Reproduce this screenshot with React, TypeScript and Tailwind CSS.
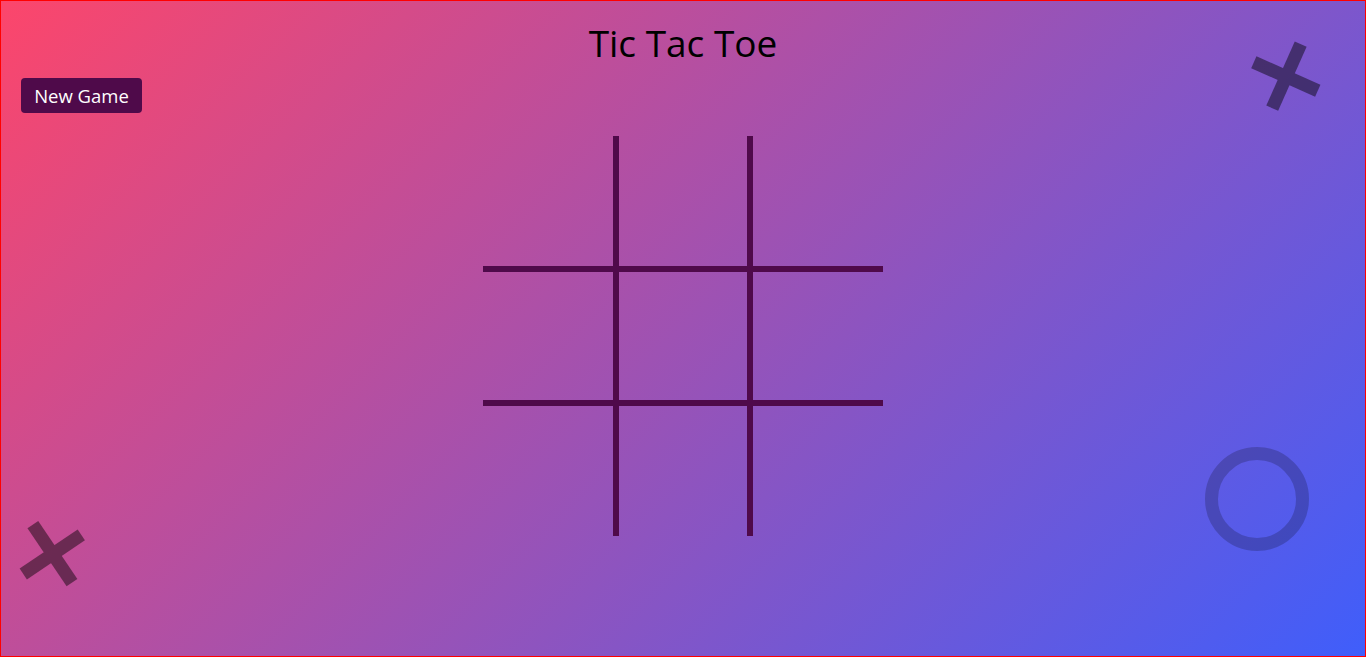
const CELLS = [
  "border-r-[3px] border-b-[3px]",
  "border-l-[3px] border-r-[3px] border-b-[3px]",
  "border-l-[3px] border-b-[3px]",
  "border-r-[3px] border-t-[3px] border-b-[3px]",
  "border-l-[3px] border-r-[3px] border-t-[3px] border-b-[3px]",
  "border-l-[3px] border-t-[3px] border-b-[3px]",
  "border-r-[3px] border-t-[3px]",
  "border-l-[3px] border-r-[3px] border-t-[3px]",
  "border-l-[3px] border-t-[3px]",
];

// plus shape, rotated into an X; opacity on the group so the bars don't stack
function Cross({ className }: { className: string }) {
  return (
    <div className={`absolute w-[70px] h-[70px] opacity-45 ${className}`}>
      <div className="absolute left-0 top-[29px] w-[70px] h-[13px] bg-black" />
      <div className="absolute top-0 left-[29px] w-[13px] h-[70px] bg-black" />
    </div>
  );
}

export default function App() {
  return (
    <div className="relative h-[657px] w-full overflow-hidden border border-[#ff0000] bg-[linear-gradient(135deg,#fc466b,#3f5efb)] font-['Open_Sans','Noto_Sans',sans-serif]">
      <Cross className="left-[1250px] top-[40px] rotate-[24deg]" />
      <Cross className="left-[16px] top-[518px] -rotate-[34deg]" />
      <div className="absolute left-[1204px] top-[446px] w-[104px] h-[104px] rounded-full border-[13px] border-black/20" />

      <h1 className="pt-[16px] text-center text-[37px] leading-[51px] text-black">Tic Tac Toe</h1>

      <div className="px-5 pt-[10px]">
        <button className="h-[35px] w-[121px] rounded-[4px] bg-[#4f0a4a] text-[18.5px] text-white">
          New Game
        </button>
      </div>

      <div className="mt-[23px] flex justify-center">
        <div className="grid h-[400px] w-[400px] grid-cols-3 grid-rows-3">
          {CELLS.map((c, i) => (
            <div key={i} className={`border-[#4f0a4a] ${c}`} />
          ))}
        </div>
      </div>
    </div>
  );
}
